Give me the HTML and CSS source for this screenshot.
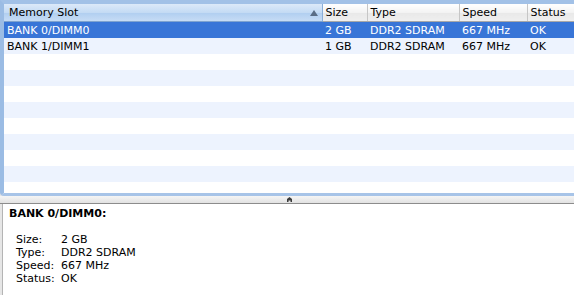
FILE: index.html
```html
<!DOCTYPE html>
<html>

<head>
    <title>Memory</title>
    <link rel="stylesheet" href="styles.css">
</head>

<body>

    <div class="list">
        <table class="slots">
            <colgroup>
                <col class="col-slot">
                <col class="col-size">
                <col class="col-type">
                <col class="col-speed">
                <col class="col-status">
            </colgroup>
            <thead>
                <tr>
                    <th class="sorted">
                        <div class="head-inner">
                            <span>Memory Slot</span>
                            <span class="sort-arrow"></span>
                        </div>
                    </th>
                    <th>Size</th>
                    <th>Type</th>
                    <th>Speed</th>
                    <th>Status</th>
                </tr>
            </thead>
            <tbody>
                <tr class="selected">
                    <td>BANK 0/DIMM0</td>
                    <td>2 GB</td>
                    <td>DDR2 SDRAM</td>
                    <td>667 MHz</td>
                    <td>OK</td>
                </tr>
                <tr>
                    <td>BANK 1/DIMM1</td>
                    <td>1 GB</td>
                    <td>DDR2 SDRAM</td>
                    <td>667 MHz</td>
                    <td>OK</td>
                </tr>
                <tr><td></td><td></td><td></td><td></td><td></td></tr>
                <tr><td></td><td></td><td></td><td></td><td></td></tr>
                <tr><td></td><td></td><td></td><td></td><td></td></tr>
                <tr><td></td><td></td><td></td><td></td><td></td></tr>
                <tr><td></td><td></td><td></td><td></td><td></td></tr>
                <tr><td></td><td></td><td></td><td></td><td></td></tr>
                <tr><td></td><td></td><td></td><td></td><td></td></tr>
                <tr><td></td><td></td><td></td><td></td><td></td></tr>
                <tr><td></td><td></td><td></td><td></td><td></td></tr>
            </tbody>
        </table>
    </div>

    <div class="splitter">
        <svg class="grip" width="7" height="5" viewBox="0 0 7 5">
            <path d="M1 2 L3.5 0 L6 2 L6 5 L4.5 5 L4.5 3.5 L2.5 3.5 L2.5 5 L1 5 Z" fill="#3c3c3c"/>
        </svg>
    </div>

    <div class="detail">
        <div class="detail-title">BANK 0/DIMM0:</div>
        <div class="detail-grid">
            <span>Size:</span><span>2 GB</span>
            <span>Type:</span><span>DDR2 SDRAM</span>
            <span>Speed:</span><span>667 MHz</span>
            <span>Status:</span><span>OK</span>
        </div>
    </div>

</body>

</html>
```

FILE: styles.css
```css
html,
body {
    margin: 0;
    height: 100%;
}

body {
    background: #e6e6e6;
    font-family: 'DejaVu Sans', Verdana, sans-serif;
    font-size: 11px;
    color: #000;
    display: flex;
    flex-direction: column;
    overflow: hidden;
}

/* table with focus ring */
.list {
    height: 189px;
    border-top: 4px solid #a2c1e7;
    border-left: 4px solid #9bbce4;
    border-bottom: 3px solid #a7c4e8;
    border-bottom-left-radius: 4px;
    background: #fff;
    overflow: hidden;
}

.slots {
    width: 570px;
    table-layout: fixed;
    border-collapse: collapse;
    border-spacing: 0;
}

.col-slot {
    width: 318px;
}

.col-size {
    width: 45px;
}

.col-type {
    width: 92px;
}

.col-speed {
    width: 68px;
}

.col-status {
    width: 47px;
}

.slots th {
    height: 17px;
    padding: 0 0 0 3px;
    font-weight: normal;
    text-align: left;
    background: linear-gradient(#ffffff, #f3f3f3 50%, #e8e8e8 51%, #efefef);
    border-bottom: 1px solid #a8a8a8;
    border-right: 1px solid #c6c6c6;
    white-space: nowrap;
}

.slots th:last-child {
    border-right: none;
}

.slots th.sorted {
    padding-left: 5px;
    background: linear-gradient(#dce9f9, #c4dbf4 50%, #b0cef0 51%, #c6dcf5);
    border-bottom-color: #7ea3cf;
    border-right-color: #8aaed8;
}

.head-inner {
    display: flex;
    align-items: center;
    justify-content: space-between;
}

.sort-arrow {
    width: 0;
    height: 0;
    margin-right: 4px;
    border-left: 4px solid transparent;
    border-right: 4px solid transparent;
    border-bottom: 6px solid #5a6d85;
}

.slots td {
    height: 16px;
    padding: 0 0 0 3px;
    white-space: nowrap;
    overflow: hidden;
}

.slots tbody tr:nth-child(even) {
    background: #edf3fe;
}

.slots tbody tr.selected {
    background: #3875d7;
    color: #fff;
}

/* split view divider */
.splitter {
    height: 7px;
    border-bottom: 1px solid #8c8c8c;
    background: linear-gradient(#f5f5f5, #e2e2e2);
    display: flex;
    justify-content: center;
    align-items: center;
}

.grip {
    margin-left: 4px;
}

/* detail pane */
.detail {
    flex: 1;
    margin-left: 2px;
    border-left: 1px solid #b4b4b4;
    background: #fff;
    padding: 3px 0 0 6px;
    line-height: 13px;
}

.detail-title {
    font-weight: bold;
    margin-bottom: 13px;
}

.detail-grid {
    display: grid;
    grid-template-columns: 45px auto;
    padding-left: 7px;
}
```
